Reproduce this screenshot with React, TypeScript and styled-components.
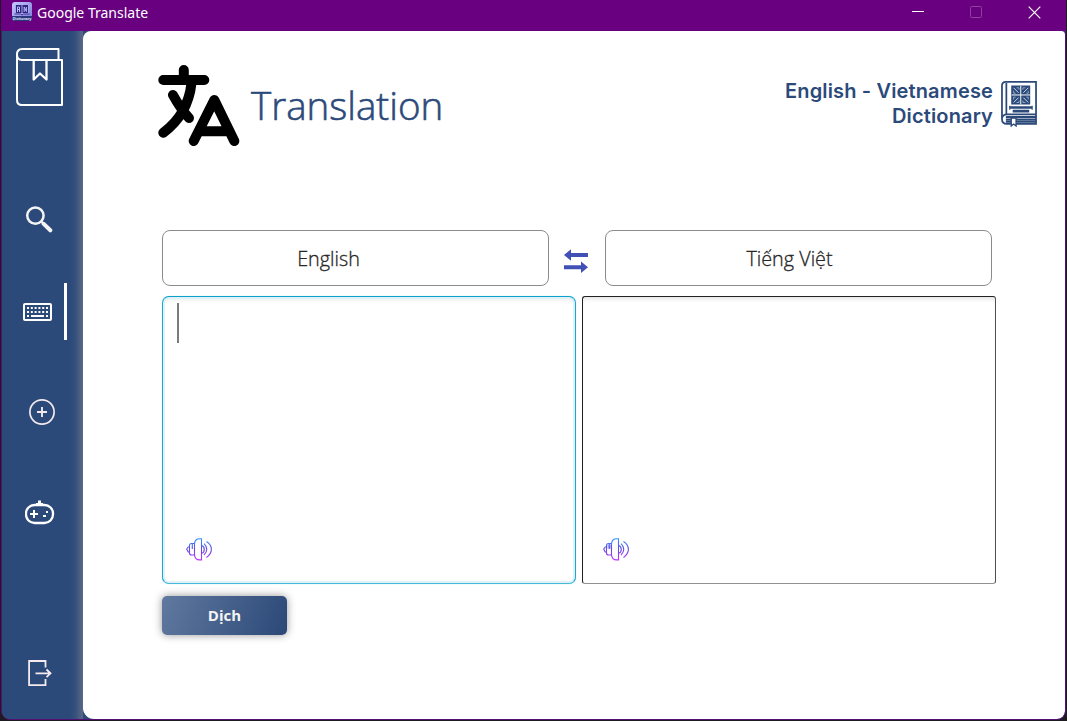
import React from 'react';
import styled, { createGlobalStyle } from 'styled-components';

const navy = '#2b4a7a';
const uiFont = `"Open Sans", "Noto Sans", sans-serif`;

const GlobalStyle = createGlobalStyle`
  * { box-sizing: border-box; }
  body { margin: 0; background: #1d1a20; font-family: ${uiFont}; overflow: hidden; }
  svg { display: block; flex: none; }
`;

const Window = styled.div`
  width: 1067px;
  height: 721px;
  display: flex;
  flex-direction: column;
  background: #1d1a20;
`;

const TitleBar = styled.header`
  height: 31px;
  flex: none;
  display: flex;
  align-items: flex-start;
  margin-right: 1px;
  padding-left: 11px;
  background: #68007f;
  border-left: 1px solid #241329;
  color: #fff;
`;

const WindowTitle = styled.span`
  flex: 1;
  margin-left: 5px;
  font-family: "Noto Sans", sans-serif;
  font-size: 14px;
  line-height: 26px;
`;

const Controls = styled.div`
  display: flex;
  gap: 46px;
  padding: 6px 25px 0 0;
`;

const Body = styled.div`
  height: 689px;
  margin: 0 1px;
  display: flex;
  background: ${navy};
  border: solid #560f72;
  border-width: 0 1px 1px;
  border-radius: 0 0 9px 9px;
  overflow: hidden;
`;

const Sidebar = styled.nav`
  width: 81px;
  flex: none;
  display: flex;
  flex-direction: column;
  background: linear-gradient(90deg, ${navy} 0 68px, #34507b 73px, #5b6988 81px);
`;

const NavItem = styled.a<{ $top: number; $left: number }>`
  display: flex;
  align-items: center;
  margin-top: ${p => p.$top}px;
  padding-left: ${p => p.$left}px;
`;

const ActiveBar = styled.span`
  width: 3px;
  height: 57px;
  margin-left: 12px;
  background: #fff;
`;

const Main = styled.main`
  flex: 1;
  padding: 34px 0 0 75px;
  background: #fff;
  border-radius: 8px 4px 8px 11px;
`;

const Header = styled.div`
  display: flex;
  align-items: flex-start;
  height: 165px;
`;

const Heading = styled.h1`
  flex: 1;
  margin: 13px 0 0 11px;
  color: ${navy};
  font-weight: 300;
  font-family: "Open Sans", sans-serif;
  font-size: 38.5px;
  line-height: 54px;
  -webkit-text-stroke: 0.6px ${navy};
`;

const Brand = styled.div`
  display: flex;
  gap: 8px;
  padding: 14px 28px 0 0;
`;

const BrandText = styled.div`
  color: ${navy};
  font-family: Inter, sans-serif;
  font-weight: 600;
  font-size: 20px;
  line-height: 25px;
  letter-spacing: 0.15px;
  text-align: right;
  white-space: nowrap;
`;

const BrandMark = styled.div`
  padding-top: 1px;
`;

const Languages = styled.div`
  display: flex;
  align-items: center;
  margin-left: 4px;
`;

const Language = styled.button<{ $shift?: number }>`
  width: 387px;
  height: 56px;
  padding: 0 ${p => p.$shift ?? 0}px 0 0;
  background: #fff;
  border: 1px solid #8b8b8b;
  border-radius: 8px;
  color: #262626;
  font-family: ${uiFont};
  font-weight: 300;
  font-size: 19.8px;
  -webkit-text-stroke: 0.3px #262626;
`;

const Swap = styled.div`
  padding: 6px 17px 0 15px;
`;

const Panes = styled.div`
  display: flex;
  gap: 6px;
  margin: 10px 0 0 4px;
`;

const Pane = styled.div<{ $focused?: boolean }>`
  width: 414px;
  height: 288px;
  display: flex;
  flex-direction: column;
  justify-content: space-between;
  padding: ${p => (p.$focused ? '6px 0 22px 14px' : '6px 0 22px 20px')};
  background: #fff;
  border: 1px solid;
  border-color: ${p => (p.$focused ? '#0f9fcd #1ba5cf #48b7dc' : '#222 #505050 #929292 #222')};
  border-radius: ${p => (p.$focused ? 7 : 3)}px;
  box-shadow: ${p =>
    p.$focused
      ? 'inset 0 0 0 2px #def2f8, inset 0 5px 4px -2px #ededed, 0 0 1px #8bd5ec'
      : 'inset 0 4px 4px -2px #e3e3e3'};
`;

const Caret = styled.span`
  width: 2px;
  height: 40px;
  background: #7b7b7b;
`;

const Speak = styled.span<{ $left: number }>`
  margin: auto 0 0 ${p => p.$left}px;
`;

const Submit = styled.button`
  display: block;
  width: 125px;
  height: 39px;
  margin: 12px 0 0 4px;
  padding: 0 0 1px;
  border: 0;
  border-radius: 5px;
  background: linear-gradient(110deg, #60799f, #2b4877);
  box-shadow: 0 0 8px rgba(0, 0, 0, 0.42);
  color: #f4f4f4;
  font-family: ${uiFont};
  font-weight: 700;
  font-size: 15px;
`;

const AppIcon = () => (
  <svg width="20" height="21" viewBox="0 0 20 21">
    <defs>
      <linearGradient id="app" x2="1" y2="1">
        <stop stopColor="#c8caff" />
        <stop offset="1" stopColor="#7777d8" />
      </linearGradient>
    </defs>
    <rect y="2" width="20" height="19" rx="3" fill="url(#app)" />
    <path d="M0 16h20v2q0 3-3 3H3q-3 0-3-3z" fill="#29377d" />
    <path d="M3 5h14v9H3z" fill="#a9a9f2" />
    <path d="M4 5h5.5v8H4zM10.5 5H16v8h-5.5z" fill="#30267d" />
    <path d="M5.5 12V7h2v5M5.5 9.5h2M12.2 12V7l2.2 4.5V7" stroke="#b9baff" fill="none" />
    <path d="M2.5 14h6l1.5 1 1.5-1h6" stroke="#3d338e" fill="none" />
    <text x="10" y="19.9" fontSize="3.6" fontWeight="700" textAnchor="middle" fill="#e6e8ff">Dictionary</text>
  </svg>
);

const BookIcon = () => (
  <svg width="49" height="60" viewBox="15 47 49 60" fill="none" stroke="#fff" strokeWidth="2" strokeLinejoin="round">
    <path d="M58.5 59V49H22q-5 0-5 5.5T22 60H62V105H22q-5 0-5-5V54" />
    <path d="M33.7 60V79.5L40 73.5l6.5 6V60" strokeWidth="2.3" />
  </svg>
);

const SearchIcon = () => (
  <svg width="28" height="28" viewBox="25 205 28 28" fill="none" stroke="#f4f4f4">
    <circle cx="35.4" cy="215.6" r="8.2" strokeWidth="2.5" />
    <path d="M41.3 221.5l2.5 2.5" strokeWidth="2.2" />
    <path d="M43.7 223.9l6.6 6.4" strokeWidth="4" strokeLinecap="round" />
  </svg>
);

const KeyboardIcon = () => (
  <svg width="29" height="18" viewBox="0 0 29 18" fill="none" stroke="#fff">
    <rect x="1" y="1" width="27" height="16" rx="1" strokeWidth="2" />
    <path d="M4 5h21M4 9h21" strokeWidth="2" strokeDasharray="2 1.8" />
    <path d="M4 13h2M8 13h13M23 13h2" strokeWidth="2" />
  </svg>
);

const PlusIcon = () => (
  <svg width="28" height="28" viewBox="28 398 28 28" fill="none" stroke="#f4e9ef" strokeWidth="1.7">
    <circle cx="42" cy="412" r="12.1" />
    <path d="M37 412h10M42 407v10" strokeWidth="1.9" />
  </svg>
);

const GameIcon = () => (
  <svg width="30" height="26" viewBox="25 499 30 26" fill="none" stroke="#fff" strokeWidth="2">
    <rect x="26" y="505" width="27" height="18" rx="8.5" strokeWidth="2.3" />
    <path d="M36 504.5h7M39.5 500.5v4" strokeWidth="3" />
    <path d="M30 514h8M34 510v8" />
    <path d="M46 512h2M43 516h3" />
  </svg>
);

const ExitIcon = () => (
  <svg width="24" height="28" viewBox="28 659 24 28" fill="none" stroke="#f6eaee" strokeWidth="1.8">
    <path d="M45.5 667.5V661H29.1v24.2h16.4V679M35.5 673.3H50M46.5 669.5l4 3.8-4 3.8" />
  </svg>
);

const TranslateIcon = () => (
  <svg width="82" height="82" viewBox="158 65 82 82" fill="none" stroke="#000" strokeWidth="10" strokeLinecap="round" strokeLinejoin="round">
    <path d="M183.8 70v9M163.3 80h41M191.5 83C189 106 179 121 163.3 132.7M173 95q7 13 16 23" />
    <path d="M193.7 141l20.6-41 20 41M202 131.3h25" />
  </svg>
);

const DictionaryIcon = () => (
  <svg width="36" height="47" viewBox="1001 81 37 48" preserveAspectRatio="none" fill="none" stroke={navy} strokeWidth="1.8">
    <path d="M1037 82.8h-31q-4 0-4 4v34q0 5 5 5h30zM1006.5 84v32.5M1002 120q1-4 5-4h30" />
    <path d="M1011.5 86.5h19.5v19.5h-19.5z" fill={navy} stroke="none" />
    <path d="M1021.3 87v19M1012 96.3h19" stroke="#fff" strokeWidth="1" />
    <path d="M1014 89l5 5M1029 89l-5 5M1014 104l5-5M1029 104l-5-5" stroke="#e7edf5" strokeWidth=".9" />
    <path d="M1014 92v2.5h2M1027 94.5h2V92M1014 101v-2.5h2M1027 98.5h2v2.5M1017 89h2.5v2M1026 89h-2.5v2M1017 104h2.5v-2M1026 104h-2.5v-2" stroke="#bfcbdc" strokeWidth=".7" />
    <path d="M1010 109h23M1013 112.8h17" strokeWidth="2.6" />
    <path d="M1010 107.3v4M1033 107.3v4" strokeWidth="1.2" />
    <path d="M1006 118.7h31M1006 121.3h31M1006 123.7h31" strokeWidth="2" />
    <path d="M1011.5 120h5v8l-2.5-2-2.5 2z" fill="#fff" strokeWidth="1.4" />
  </svg>
);

const SwapIcon = () => (
  <svg width="24" height="24" viewBox="0 0 24 24" fill="#4050b5">
    <path d="M0 6l7-5.7v3.7h17v4H7v3.7zM24 18.2l-7-5.7v3.7H0v4h17v3.7z" />
  </svg>
);

const SpeakerIcon = ({ id, filled }: { id: string; filled?: boolean }) => (
  <svg width="27" height="23" viewBox="0 0 27 23" fill="none" stroke={`url(#${id})`} strokeWidth="1.1">
    <defs>
      <linearGradient id={id} gradientUnits="userSpaceOnUse" x1="0" y1="0" x2="0" y2="23">
        <stop stopColor="#3297ff" />
        <stop offset=".5" stopColor="#6548df" />
        <stop offset="1" stopColor="#c52fff" />
      </linearGradient>
    </defs>
    {filled && <path d="M4.5 6.5h3.5v4h-3.5z" fill="#b9b0ff" stroke="none" />}
    <path d="M15.5.7v21.2h-2q-4.500 0-5-5V5.700q.5-5 5-5zM8.500 5.500H5.500q-2 0-2 2v7.500q0 2 2 2h3M3.500 9H2.200l-1.500 2 1.500 3h1.300M6.300 6v5M15.500 7.500c3.700 1 3.700 6.800 0 7.800M18 5.700c3.700 3.300 3.700 8 0 11.300M20.500 3.500c6.500 4 6.500 11.500 0 16" />
  </svg>
);

export default function App() {
  return (
    <Window>
      <GlobalStyle />
      <TitleBar>
        <AppIcon />
        <WindowTitle>Google Translate</WindowTitle>
        <Controls>
          <svg width="12" height="12" stroke="#fff"><path d="M0 5.5h12" /></svg>
          <svg width="12" height="12" fill="none" stroke="#9140a2"><rect x=".5" y=".5" width="11" height="11" rx="1" /></svg>
          <svg width="13" height="13" stroke="#fff" strokeWidth="1.2"><path d="M.7.7l11.6 11.6M12.3.7L.7 12.3" /></svg>
        </Controls>
      </TitleBar>
      <Body>
        <Sidebar>
          <NavItem $top={16} $left={13}><BookIcon /></NavItem>
          <NavItem $top={98} $left={23}><SearchIcon /></NavItem>
          <NavItem $top={50} $left={21}><KeyboardIcon /><ActiveBar /></NavItem>
          <NavItem $top={58} $left={26}><PlusIcon /></NavItem>
          <NavItem $top={73} $left={23}><GameIcon /></NavItem>
          <NavItem $top={134} $left={26}><ExitIcon /></NavItem>
        </Sidebar>
        <Main>
          <Header>
            <TranslateIcon />
            <Heading>Translation</Heading>
            <Brand>
              <BrandText>English - Vietnamese<br />Dictionary</BrandText>
              <BrandMark><DictionaryIcon /></BrandMark>
            </Brand>
          </Header>
          <Languages>
            <Language $shift={54}>English</Language>
            <Swap><SwapIcon /></Swap>
            <Language $shift={18}>Tiếng Việt</Language>
          </Languages>
          <Panes>
            <Pane $focused>
              <Caret />
              <Speak $left={9}><SpeakerIcon id="source" /></Speak>
            </Pane>
            <Pane>
              <Speak $left={0}><SpeakerIcon id="target" filled /></Speak>
            </Pane>
          </Panes>
          <Submit>Dịch</Submit>
        </Main>
      </Body>
    </Window>
  );
}
